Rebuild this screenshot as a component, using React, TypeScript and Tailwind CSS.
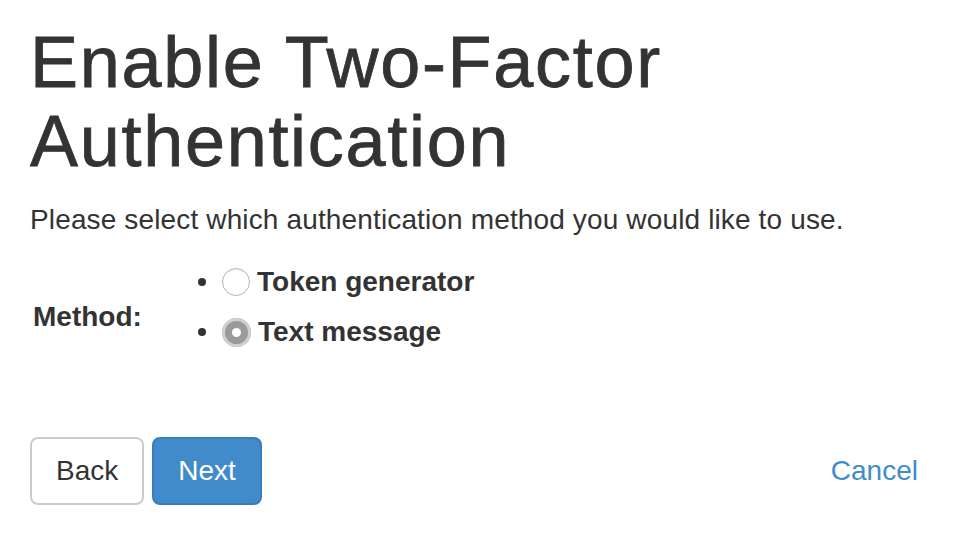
import { useState } from 'react';

type Method = 'token' | 'sms';

const options: { id: Method; label: string }[] = [
  { id: 'token', label: 'Token generator' },
  { id: 'sms', label: 'Text message' },
];

function Radio({ checked }: { checked: boolean }) {
  if (checked) {
    return (
      <span className="flex h-[29px] w-[29px] shrink-0 items-center justify-center rounded-full bg-[#9a9a9a] ring-[3px] ring-[#d0d0d0] ring-inset">
        <span className="h-[9px] w-[9px] rounded-full bg-white" />
      </span>
    );
  }
  return (
    <span className="h-[28px] w-[28px] shrink-0 rounded-full border border-[#b5b5b5] bg-white shadow-[inset_0_1px_1px_rgba(0,0,0,0.08)]" />
  );
}

export default function App() {
  const [method, setMethod] = useState<Method>('sms');

  return (
    <div className="min-h-screen bg-white px-[30px] pt-[23px] font-['Liberation_Sans',Arial,sans-serif] text-[#333]">
      <h1 className="text-[72px] leading-[79px] font-normal tracking-[1.7px] [-webkit-text-stroke:0.8px_#333]">
        Enable Two-Factor
        <br />
        Authentication
      </h1>
      <p className="mt-[19px] text-[28px] leading-[40px] tracking-[0.14px]">
        Please select which authentication method you would like to use.
      </p>

      <div className="mt-[17px] flex">
        <div className="w-[168px] pl-[3px] pt-[40px] text-[28px] leading-[40px] font-bold">Method:</div>
        <ul>
          {options.map((o) => (
            <li key={o.id} className="flex h-[50px] items-center">
              <span className="mr-[16px] h-[8px] w-[8px] rounded-full bg-[#333]" />
              <button
                type="button"
                onClick={() => setMethod(o.id)}
                className="flex items-center gap-[7px] text-[28px] leading-[40px] font-bold"
              >
                <Radio checked={method === o.id} />
                {o.label}
              </button>
            </li>
          ))}
        </ul>
      </div>

      <div className="mt-[80px] flex items-center">
        <button
          type="button"
          className="h-[68px] rounded-[8px] border-2 border-[#ccc] bg-white px-[24px] text-[28px] leading-[40px] text-[#333]"
        >
          Back
        </button>
        <button
          type="button"
          className="ml-[8px] h-[68px] rounded-[8px] border-2 border-[#357ebd] bg-[#428bca] px-[24px] text-[28px] leading-[40px] text-white"
        >
          Next
        </button>
        <button
          type="button"
          className="ml-auto h-[68px] px-[24px] text-[28px] leading-[40px] text-[#428bca]"
        >
          Cancel
        </button>
      </div>
    </div>
  );
}
